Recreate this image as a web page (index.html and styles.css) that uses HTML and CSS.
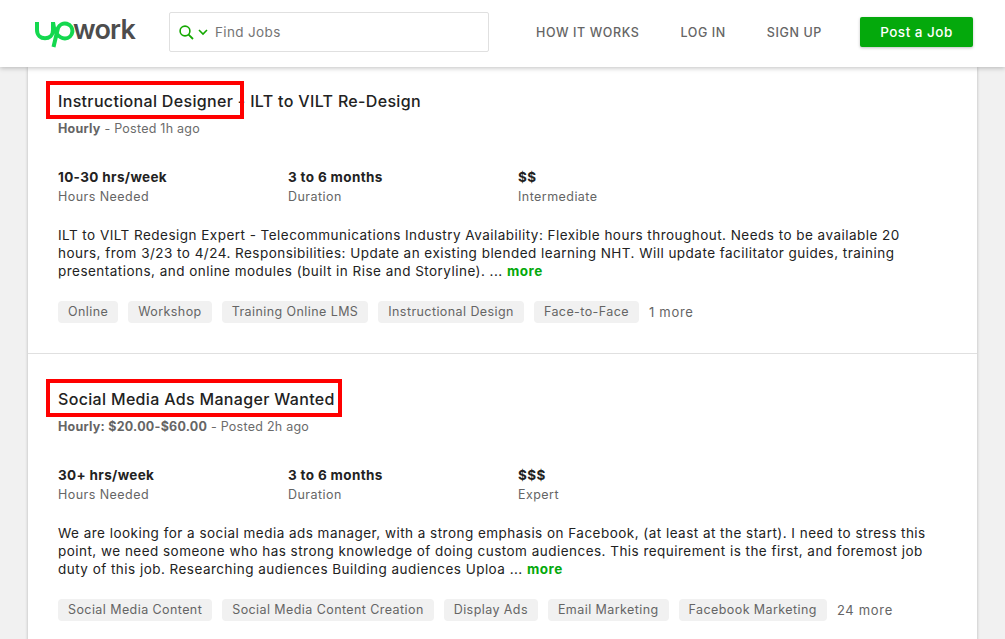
FILE: index.html
```html
<!DOCTYPE html>
<html lang="en">
<head>
<meta charset="utf-8">
<title>Upwork jobs</title>
<link rel="stylesheet" href="styles.css">
</head>
<body>
<header class="topbar">
  <a class="logo" href="#" aria-label="Upwork">
    <svg class="logo-up" width="42" height="30" viewBox="0 0 42 30" aria-hidden="true">
      <path d="M3 1 V9 C3 20 19 20 19 9 V1 C19.5 9 24 17.5 31 17.5 A7.5 7.5 0 1 0 24 7 L19.5 26" fill="none" stroke="#14d84f" stroke-width="4"/>
    </svg>
    <span class="logo-word">work</span>
  </a>
  <div class="search">
    <svg width="15" height="15" viewBox="0 0 15 15" aria-hidden="true">
      <circle cx="6" cy="6" r="4.9" fill="none" stroke="#14a800" stroke-width="1.6"/>
      <path d="M9.6 9.6 L14 14" stroke="#14a800" stroke-width="1.8"/>
    </svg>
    <svg class="chev" width="10" height="7" viewBox="0 0 10 7" aria-hidden="true">
      <path d="M1 1 L5 5 L9 1" fill="none" stroke="#14a800" stroke-width="1.6"/>
    </svg>
    <span class="search-text">Find Jobs</span>
  </div>
  <nav class="nav">
    <a href="#">HOW IT WORKS</a>
    <a href="#">LOG IN</a>
    <a href="#">SIGN UP</a>
  </nav>
  <a class="post" href="#">Post a Job</a>
</header>
<main class="card">
  <article class="job">
    <h2 class="title"><span class="mark mark-a"></span>Instructional Designer - ILT to VILT Re-Design</h2>
    <p class="meta"><b>Hourly</b> - Posted 1h ago</p>
    <div class="stats">
      <div><b>10-30 hrs/week</b><span>Hours Needed</span></div>
      <div><b>3 to 6 months</b><span>Duration</span></div>
      <div><b>$$</b><span>Intermediate</span></div>
    </div>
    <p class="desc">ILT to VILT Redesign Expert - Telecommunications Industry Availability: Flexible hours throughout. Needs to be available 20<br>hours, from 3/23 to 4/24. Responsibilities: Update an existing blended learning NHT. Will update facilitator guides, training<br>presentations, and online modules (built in Rise and Storyline). ... <a href="#">more</a></p>
    <div class="tags">
      <span class="tag">Online</span>
      <span class="tag">Workshop</span>
      <span class="tag">Training Online LMS</span>
      <span class="tag">Instructional Design</span>
      <span class="tag">Face-to-Face</span>
      <span class="extra">1 more</span>
    </div>
  </article>
  <article class="job">
    <h2 class="title"><span class="mark mark-b"></span>Social Media Ads Manager Wanted</h2>
    <p class="meta"><b>Hourly: $20.00-$60.00</b> - Posted 2h ago</p>
    <div class="stats">
      <div><b>30+ hrs/week</b><span>Hours Needed</span></div>
      <div><b>3 to 6 months</b><span>Duration</span></div>
      <div><b>$$$</b><span>Expert</span></div>
    </div>
    <p class="desc">We are looking for a social media ads manager, with a strong emphasis on Facebook, (at least at the start). I need to stress this<br>point, we need someone who has strong knowledge of doing custom audiences. This requirement is the first, and foremost job<br>duty of this job. Researching audiences Building audiences Uploa ... <a href="#">more</a></p>
    <div class="tags">
      <span class="tag">Social Media Content</span>
      <span class="tag">Social Media Content Creation</span>
      <span class="tag">Display Ads</span>
      <span class="tag">Email Marketing</span>
      <span class="tag">Facebook Marketing</span>
      <span class="extra">24 more</span>
    </div>
  </article>
</main>
</body>
</html>
```
FILE: styles.css
```css
* { box-sizing: border-box; }
html, body { margin: 0; height: 639px; overflow: hidden; }
body {
  background: #f1f1f1;
  color: #222;
  font-family: Inter, "Liberation Sans", sans-serif;
  font-size: 13px;
}
a { text-decoration: none; }
.topbar {
  position: relative;
  z-index: 2;
  height: 67px;
  background: #fff;
  box-shadow: 0 1px 5px rgba(0,0,0,.25);
  display: flex;
  align-items: center;
  padding: 0 32px 3px 34px;
}
.logo { display: flex; align-items: flex-start; width: 135px; height: 36px; }
.logo-up { flex: none; margin-top: 7px; }
.logo-word {
  color: #4d4d4d;
  font-size: 27px;
  font-weight: 600;
  line-height: 32px;
  letter-spacing: -.8px;
  margin-left: -3px;
}
.search {
  width: 320px;
  height: 40px;
  border: 1px solid #e0e0e0;
  border-radius: 2px;
  display: flex;
  align-items: center;
  padding-left: 9px;
}
.chev { margin-left: 4px; }
.search-text { margin-left: 7px; color: #757575; font-size: 13.5px; letter-spacing: .35px; }
.nav { display: flex; gap: 41px; margin-left: 47px; }
.nav a { color: #656565; font-size: 12.5px; font-weight: 500; letter-spacing: .6px; }
.post {
  margin-left: auto;
  width: 113px;
  height: 30px;
  border-radius: 2px;
  background: #04a90c;
  box-shadow: 0 1px 3px rgba(0,0,0,.25);
  color: #fff;
  font-size: 13.5px;
  font-weight: 500;
  letter-spacing: .5px;
  display: flex;
  align-items: center;
  justify-content: center;
}
.card {
  width: 949px;
  margin-left: 28px;
  background: #fff;
  box-shadow: 0 0 3px rgba(0,0,0,.25);
}
.job { padding: 35px 30px 0; height: 298px; border-bottom: 1px solid #e0e0e0; }
.job:first-child { height: 287px; padding-top: 24px; }
.title {
  position: relative;
  margin: 0;
  font-size: 16px;
  line-height: 20px;
  font-weight: 500;
  letter-spacing: .33px;
  color: #222;
}
.mark {
  position: absolute;
  left: -12px;
  top: -10px;
  height: 38px;
  border: 4px solid #f00;
}
.mark-a { width: 198px; }
.mark-b { width: 296px; }
.meta { margin: 9px 0 0; font-size: 12.5px; line-height: 18px; letter-spacing: .25px; color: #6b6b6b; }
.meta b { font-weight: 700; color: #656565; }
.stats { display: grid; grid-template-columns: repeat(3, 230px); margin-top: 30px; }
.stats b { display: block; font-size: 13.5px; line-height: 19px; font-weight: 700; letter-spacing: .35px; color: #222; }
.stats span { display: block; font-size: 12.5px; line-height: 19px; letter-spacing: .45px; color: #656565; }
.desc { margin: 20px 0 0; font-size: 13.5px; line-height: 18px; letter-spacing: .47px; color: #222; white-space: nowrap; }
.desc a { color: #04a90c; font-weight: 700; }
.tags { display: flex; align-items: center; gap: 10px; margin-top: 21px; }
.tag {
  height: 22px;
  padding: 0 10px;
  border-radius: 4px;
  background: #f1f1f1;
  color: #656565;
  font-size: 12.5px;
  letter-spacing: .42px;
  line-height: 22px;
}
.extra { color: #656565; font-size: 13px; letter-spacing: .7px; }
```
